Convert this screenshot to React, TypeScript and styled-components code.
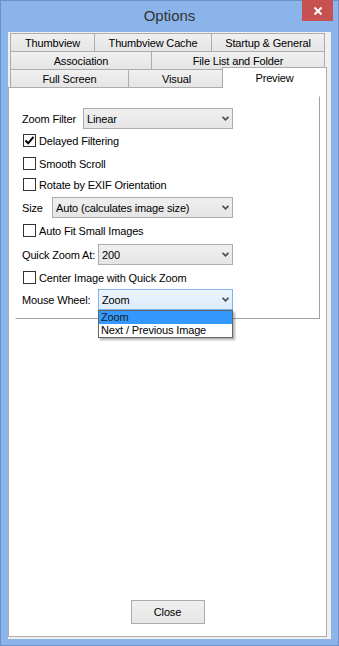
import React from "react";
import styled, { createGlobalStyle } from "styled-components";

const GlobalStyle = createGlobalStyle`
  html, body {
    margin: 0;
    padding: 0;
    background: #8ab4ea;
  }
  body {
    font-family: "Liberation Sans", Arial, sans-serif;
    font-size: 11px;
    letter-spacing: -0.15px;
    color: #000;
    overflow: hidden;
  }
  * {
    box-sizing: border-box;
  }
`;

const Window = styled.div`
  width: 339px;
  height: 646px;
  display: flex;
  flex-direction: column;
  background: #8ab4ea;
  border: 1px solid #6c91c6;
`;

const TitleBar = styled.header`
  height: 31px;
  flex: none;
  display: grid;
  grid-template-columns: 1fr auto 1fr;
  align-items: start;
`;

const Title = styled.div`
  grid-column: 2;
  font-size: 15px;
  letter-spacing: 0;
  line-height: 30px;
  color: #333;
`;

const CloseBox = styled.div`
  grid-column: 3;
  justify-self: end;
  width: 31px;
  height: 21px;
  margin: -1px 5px 0 0;
  background: #c75050;
  display: flex;
  align-items: center;
  justify-content: center;
`;

const Client = styled.div`
  flex: 1;
  margin: 0 7px 6px 7px;
  padding: 1px 4px 2px 0;
  background: #f0f0f0;
  display: flex;
  flex-direction: column;
`;

const TabStrip = styled.nav`
  padding: 0 2px;
  display: flex;
  flex-direction: column;
`;

const TabRow = styled.div`
  display: flex;
  height: 18px;
`;

const Tab = styled.div<{ $w: number; $active?: boolean }>`
  flex: none;
  width: ${(p) => p.$w}px;
  height: ${(p) => (p.$active ? 21 : 18)}px;
  margin: ${(p) => (p.$active ? "-2px 0 -1px -3px" : "0 0 0 -1px")};
  border: 1px solid #acacac;
  border-bottom: none;
  background: ${(p) => (p.$active ? "#fff" : "linear-gradient(#f0f0f0, #e5e5e5)")};
  position: relative;
  z-index: ${(p) => (p.$active ? 1 : 0)};
  display: flex;
  align-items: center;
  justify-content: center;
  white-space: nowrap;

  &:first-child {
    margin-left: 0;
  }
`;

const TabPanel = styled.section`
  flex: 1;
  background: #fff;
  border: 1px solid #acacac;
  display: flex;
  flex-direction: column;
`;

const Frame = styled.div`
  height: 223px;
  margin: 8px 6px 0 6px;
  padding-left: 6px;
  border-top: 1px solid #fff;
  border-left: 1px solid #fff;
  border-right: 1px solid #a0a0a0;
  border-bottom: 1px solid #a0a0a0;
  display: flex;
  flex-direction: column;
`;

const FieldRow = styled.div<{ $mt: number }>`
  display: flex;
  align-items: center;
  height: 21px;
  margin-top: ${(p) => p.$mt}px;
`;

const FieldLabel = styled.span<{ $w: number }>`
  width: ${(p) => p.$w}px;
  flex: none;
  white-space: nowrap;
`;

const Combo = styled.div<{ $w: number; $hot?: boolean }>`
  position: relative;
  width: ${(p) => p.$w}px;
  height: 21px;
  padding: 0 3px;
  border: 1px solid ${(p) => (p.$hot ? "#7eb4ea" : "#acacac")};
  background: ${(p) =>
    p.$hot ? "linear-gradient(#ecf4fc, #dcecfc)" : "linear-gradient(#f0f0f0, #e5e5e5)"};
  display: flex;
  align-items: center;
`;

const ComboText = styled.span`
  flex: 1;
  white-space: nowrap;
`;

const DropList = styled.ul`
  position: absolute;
  top: calc(100% + 1px);
  left: -1px;
  width: calc(100% + 2px);
  margin: 0;
  padding: 0;
  list-style: none;
  background: #fff;
  border: 1px solid #646464;
  box-shadow: 2px 2px 2px rgba(0, 0, 0, 0.3);
  z-index: 2;
`;

const DropItem = styled.li<{ $selected?: boolean }>`
  height: 13px;
  line-height: 13px;
  padding-left: 2px;
  background: ${(p) => (p.$selected ? "#3399ff" : "transparent")};
  color: ${(p) => (p.$selected ? "#1a1a1a" : "#000")};
  white-space: nowrap;
`;

const CheckRow = styled.label<{ $mt: number }>`
  display: flex;
  align-items: center;
  gap: 3px;
  height: 13px;
  margin: ${(p) => p.$mt}px 0 0 1px;
  white-space: nowrap;
`;

const Box = styled.span`
  width: 13px;
  height: 13px;
  flex: none;
  border: 1px solid #333;
  background: #fff;
  display: flex;
  align-items: center;
  justify-content: center;
`;

const Footer = styled.div`
  margin-top: auto;
  padding-bottom: 12px;
  display: flex;
  justify-content: center;
`;

const Button = styled.button`
  width: 74px;
  height: 24px;
  padding: 0;
  border: 1px solid #acacac;
  background: linear-gradient(#f0f0f0, #e5e5e5);
  font-family: "Liberation Sans", Arial, sans-serif;
  font-size: 11px;
  letter-spacing: -0.15px;
  color: #000;
`;

const Arrow = () => (
  <svg width="7" height="5" viewBox="0 0 7 5">
    <polyline points="0.5,0.8 3.5,3.8 6.5,0.8" fill="none" stroke="#505050" strokeWidth="1.8" />
  </svg>
);

const Check: React.FC<{ checked?: boolean; label: string; mt: number }> = ({ checked, label, mt }) => (
  <CheckRow $mt={mt}>
    <Box>
      {checked && (
        <svg width="11" height="11" viewBox="0 0 11 11">
          <path d="M1.5 5.5 L4.2 8.3 L9.5 1.8" fill="none" stroke="#000" strokeWidth="2" />
        </svg>
      )}
    </Box>
    {label}
  </CheckRow>
);

const tabRows = [
  [
    { label: "Thumbview", w: 85 },
    { label: "Thumbview Cache", w: 118 },
    { label: "Startup & General", w: 114 },
  ],
  [
    { label: "Association", w: 142 },
    { label: "File List and Folder", w: 174 },
  ],
  [
    { label: "Full Screen", w: 119 },
    { label: "Visual", w: 97 },
    { label: "Preview", w: 105, active: true },
  ],
];

const App: React.FC = () => {
  return (
    <>
      <GlobalStyle />
      <Window>
        <TitleBar>
          <Title>Options</Title>
          <CloseBox>
            <svg width="10" height="10" viewBox="0 0 10 10">
              <path d="M1.5 1.5 L8.5 8.5 M8.5 1.5 L1.5 8.5" stroke="#fff" strokeWidth="2" />
            </svg>
          </CloseBox>
        </TitleBar>

        <Client>
          <TabStrip>
            {tabRows.map((row, i) => (
              <TabRow key={i}>
                {row.map((t) => (
                  <Tab key={t.label} $w={t.w} $active={"active" in t}>
                    {t.label}
                  </Tab>
                ))}
              </TabRow>
            ))}
          </TabStrip>

          <TabPanel>
            <Frame>
              <FieldRow $mt={11}>
                <FieldLabel $w={61}>Zoom Filter</FieldLabel>
                <Combo $w={150}>
                  <ComboText>Linear</ComboText>
                  <Arrow />
                </Combo>
              </FieldRow>

              <Check checked label="Delayed Filtering" mt={5} />
              <Check label="Smooth Scroll" mt={10} />
              <Check label="Rotate by EXIF Orientation" mt={8} />

              <FieldRow $mt={6}>
                <FieldLabel $w={30}>Size</FieldLabel>
                <Combo $w={181}>
                  <ComboText>Auto (calculates image size)</ComboText>
                  <Arrow />
                </Combo>
              </FieldRow>

              <Check label="Auto Fit Small Images" mt={6} />

              <FieldRow $mt={7}>
                <FieldLabel $w={76}>Quick Zoom At:</FieldLabel>
                <Combo $w={135}>
                  <ComboText>200</ComboText>
                  <Arrow />
                </Combo>
              </FieldRow>

              <Check label="Center Image with Quick Zoom" mt={6} />

              <FieldRow $mt={5}>
                <FieldLabel $w={76}>Mouse Wheel:</FieldLabel>
                <Combo $w={135} $hot>
                  <ComboText>Zoom</ComboText>
                  <Arrow />
                  <DropList>
                    <DropItem $selected>Zoom</DropItem>
                    <DropItem>Next / Previous Image</DropItem>
                  </DropList>
                </Combo>
              </FieldRow>
            </Frame>

            <Footer>
              <Button>Close</Button>
            </Footer>
          </TabPanel>
        </Client>
      </Window>
    </>
  );
};

export default App;
